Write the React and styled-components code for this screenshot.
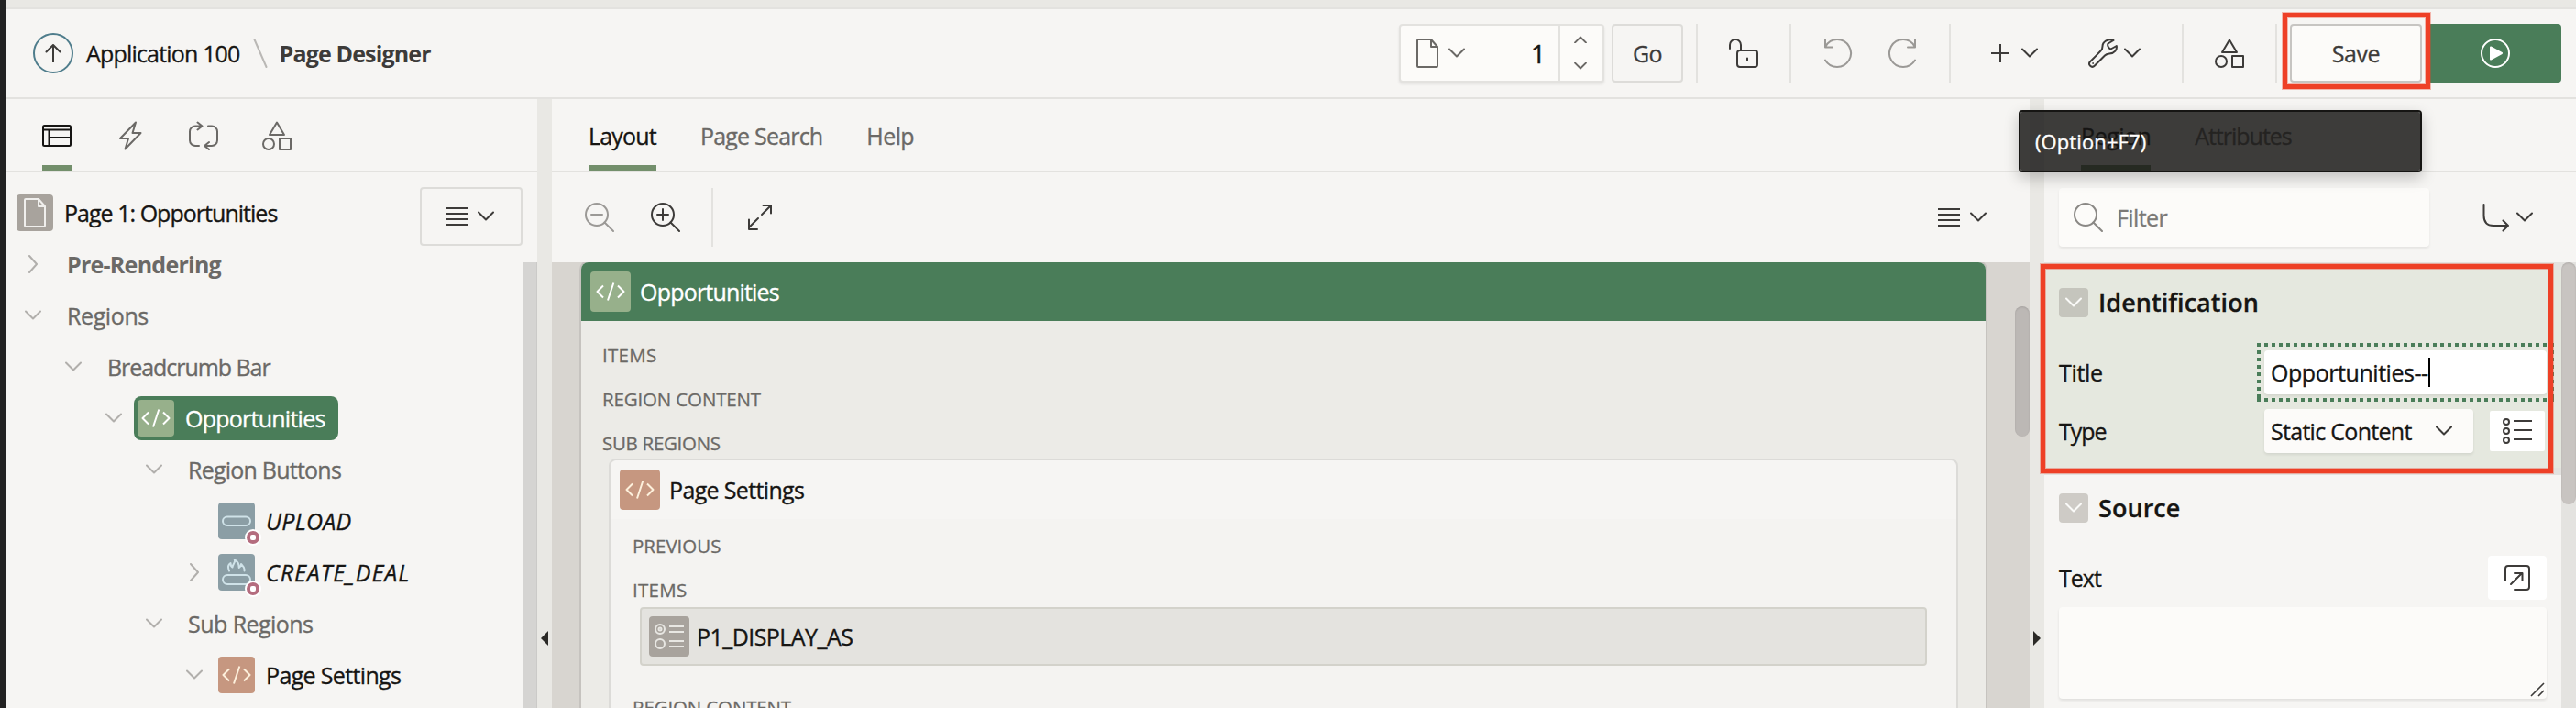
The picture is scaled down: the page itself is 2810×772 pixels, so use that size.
import React from "react";
import styled, { createGlobalStyle, css } from "styled-components";

const c = {
  page: "#f6f5f3",
  gutter: "#e9e8e4",
  line: "#e3e2df",
  lineDark: "#dddcd9",
  ink: "#161513",
  dark: "#3d3b39",
  muted: "#6b6966",
  faint: "#b1afac",
  green: "#4a7d59",
  greenSoft: "#97b08b",
  greenMid: "#738f6b",
  field: "#fcfbf9",
  clay: "#c69780",
  steel: "#8b9ea5",
  stone: "#a8a39d",
  red: "#ee4026",
};

const GlobalStyle = createGlobalStyle`
  *, *::before, *::after { box-sizing: border-box; }
  html, body { margin: 0; padding: 0; overflow: hidden; }
  body {
    background: ${c.page};
    color: ${c.ink};
    font-family: "Open Sans", "Noto Sans", sans-serif;
    font-size: 25px;
    line-height: 36px;
  }
  svg { display: block; flex: none; }
`;

/* ---------- shared parts ---------- */

const Text = styled.span`
  white-space: pre;
  flex: none;
  letter-spacing: ${(p) => p.$track ?? -0.6}px;
  color: ${(p) => p.$color ?? "inherit"};
  font-weight: ${(p) => (p.$bold ? 700 : 400)};
  font-style: ${(p) => (p.$italic ? "italic" : "normal")};
  -webkit-text-stroke: ${(p) => (p.$bold ? 0 : 0.35)}px currentColor;
`;

const Svg = ({ w = 32, h = 32, color = "currentColor", sw = 2, children, ...rest }) => (
  <svg width={w} height={h} viewBox={`0 0 ${w} ${h}`} fill="none" stroke={color} strokeWidth={sw} strokeLinecap="round" strokeLinejoin="round" {...rest}>
    {children}
  </svg>
);

const ChevronDown = (p) => (
  <Svg w={18} h={12} {...p}><path d="M1 1.5 9 9.5 17 1.5" /></Svg>
);
const ChevronRight = (p) => (
  <Svg w={12} h={20} {...p}><path d="M2 1 10 10 2 19" /></Svg>
);
const MenuIcon = () => (
  <Svg w={24} h={20} strokeLinecap="butt"><path d="M0 1H24M0 7H24M0 13H24M0 19H24" /></Svg>
);
const CodeIcon = ({ color }) => (
  <Svg w={32} h={20} color={color} strokeLinecap="butt">
    <path d="M8 3.5 1.5 10 8 16.5M24 3.5 30.5 10 24 16.5M19.3 .5 13 19.5" />
  </Svg>
);
const ShapesIcon = (p) => (
  <Svg {...p}>
    <path d="M16 1.5 24 15H8Z" />
    <circle cx="7" cy="25" r="6" />
    <rect x="19" y="19" width="12" height="12" />
  </Svg>
);
const PageIcon = ({ color, w = 24, h = 32 }) => (
  <Svg w={w} h={h} color={color}>
    <path d={`M2 1H${w - 8}L${w - 1} 9V${h - 2}a1 1 0 0 1-1 1H2a1 1 0 0 1-1-1V2a1 1 0 0 1 1-1ZM${w - 8} 1V9H${w - 1}`} />
  </Svg>
);
const SearchIcon = ({ color, children }) => (
  <Svg color={color}>
    <circle cx="13" cy="13" r="12" />
    <path d="M21.5 21.5 31 31" />
    {children}
  </Svg>
);

const Tile = styled.span`
  display: flex;
  flex: none;
  align-items: center;
  justify-content: center;
  position: relative;
  width: ${(p) => p.$size ?? 40}px;
  height: ${(p) => p.$size ?? 40}px;
  border-radius: 4px;
  background: ${(p) => p.$bg};
`;

const Highlight = styled.div`
  position: absolute;
  border: 5px solid ${c.red};
  box-shadow: 0 0 0 1px rgba(238, 64, 38, 0.35), inset 0 0 0 1px rgba(238, 64, 38, 0.35);
  pointer-events: none;
  z-index: 3;
`;

/* ---------- frame ---------- */

const Shell = styled.div`
  display: grid;
  grid-template-rows: 10px 98px 664px;
  width: 2810px;
  height: 772px;
  border-left: 6px solid #222;
  background: ${c.page};
  overflow: hidden;
`;
const TopStrip = styled.div`
  background: ${c.gutter};
  border-bottom: 2px solid ${c.line};
`;
const Header = styled.header`
  display: flex;
  align-items: center;
  justify-content: space-between;
  padding: 0 16px 0 30px;
  border-bottom: 2px solid ${c.line};
`;
const Crumbs = styled.nav`
  display: flex;
  align-items: center;
`;
const UpButton = styled.span`
  display: flex;
  align-items: center;
  justify-content: center;
  width: 44px;
  height: 44px;
  margin-right: 14px;
  border: 2px solid #4f7d8c;
  border-radius: 50%;
  color: ${c.dark};
`;
const Slash = styled.span`
  display: flex;
  margin: 0 13px 0 14px;
`;

const Tools = styled.div`
  display: flex;
  align-items: center;
  height: 64px;
  color: ${c.dark};
`;
const Divider = styled.span`
  flex: none;
  width: 2px;
  height: 64px;
  background: ${c.line};
`;
const Tool = styled.span`
  display: flex;
  align-items: center;
  justify-content: center;
  gap: ${(p) => p.$gap ?? 0}px;
  width: ${(p) => p.$w}px;
  margin-right: ${(p) => p.$after ?? 0}px;
  color: ${(p) => (p.$off ? "#9b9996" : c.dark)};
`;
const PageSelect = styled.div`
  display: flex;
  width: 224px;
  height: 64px;
  margin-right: 8px;
  border: 2px solid ${c.line};
  border-radius: 4px;
  background: ${c.field};
  box-shadow: 0 2px 3px rgba(0, 0, 0, 0.08);
`;
const PagePick = styled.div`
  display: flex;
  flex: 1;
  align-items: center;
  gap: 11px;
  padding: 0 14px 0 17px;
  border-right: 2px solid ${c.line};
  color: ${c.muted};
`;
const PageNumber = styled.span`
  flex: 1;
  text-align: right;
  font-size: 28px;
  color: ${c.ink};
  -webkit-text-stroke: 0.5px currentColor;
`;
const Stepper = styled.div`
  display: flex;
  flex-direction: column;
  align-items: center;
  justify-content: space-between;
  width: 46px;
  padding: 11px 2px 12px 0;
  color: ${c.muted};
`;
const OutlineButton = styled.span`
  display: flex;
  align-items: center;
  justify-content: center;
  gap: ${(p) => p.$gap ?? 0}px;
  flex: none;
  width: ${(p) => p.$w}px;
  height: 64px;
  padding-right: ${(p) => p.$pr ?? 0}px;
  border: 2px solid ${(p) => (p.$raised ? "#c7c5c2" : c.lineDark)};
  border-radius: 4px;
  background: ${(p) => (p.$raised ? c.field : "transparent")};
  color: ${c.dark};
`;
const SaveSlot = styled.div`
  position: relative;
  margin-left: 14px;
`;
const SaveHighlight = styled(Highlight)`
  inset: -12px -9px -7px -8px;
`;
const RunButton = styled.span`
  display: flex;
  align-items: center;
  justify-content: center;
  width: 146px;
  height: 64px;
  margin-left: 6px;
  padding-left: 2px;
  border-radius: 4px;
  background: ${c.green};
`;

const Main = styled.main`
  display: grid;
  grid-template-columns: 580px 16px 1612px 16px 580px;
`;
const Gutter = styled.div`
  display: flex;
  align-items: center;
  justify-content: center;
  padding-top: 512px;
  background: ${c.gutter};
`;
const Panel = styled.section`
  display: grid;
  grid-template-rows: 80px 98px 486px;
  min-width: 0;
`;
const Tabs = styled.div`
  display: flex;
  align-items: stretch;
  gap: 48px;
  padding-left: 40px;
  border-bottom: 2px solid ${c.line};
`;
const Tab = styled.span`
  display: flex;
  align-items: center;
  padding-top: 2px;
  color: ${(p) => (p.$active ? c.ink : c.muted)};
  ${(p) => p.$active && css`box-shadow: inset 0 -6px 0 ${c.greenMid};`}
`;

/* ---------- left tree ---------- */

const PageHead = styled.div`
  display: flex;
  align-items: flex-start;
  justify-content: space-between;
  padding: 16px 16px 0 12px;
`;
const PageName = styled.div`
  display: flex;
  align-items: center;
  gap: 12px;
  margin-top: 8px;
`;
const TreeBody = styled.div`
  display: flex;
  justify-content: space-between;
`;
const Tree = styled.div`
  display: flex;
  flex-direction: column;
  margin-top: -26px;
  color: ${c.muted};
`;
const TreeRow = styled.div`
  display: flex;
  align-items: center;
  height: 56px;
  padding-left: ${(p) => 8 + p.$level * 44}px;
`;
const Toggle = styled.span`
  display: flex;
  align-items: center;
  justify-content: center;
  width: 44px;
  height: 40px;
  color: ${c.faint};
`;
const NodeLabel = styled.span`
  display: flex;
  align-items: center;
  gap: 12px;
  height: 48px;
  margin-left: ${(p) => (p.$group ? 11 : 0)}px;
  padding: 0 14px 0 4px;
  border-radius: 8px;
  background: ${(p) => (p.$selected ? c.green : "transparent")};
  color: ${(p) => (p.$selected ? "#fff" : p.$group ? c.muted : c.ink)};
`;
const Badge = styled.span`
  position: absolute;
  right: -7px;
  bottom: -7px;
  width: 18px;
  height: 18px;
  border: 2px solid #fff;
  border-radius: 50%;
  background: #b46c7e;
  &::after {
    content: "";
    display: block;
    width: 6px;
    height: 6px;
    margin: 4px;
    border-radius: 2px;
    background: #fff;
  }
`;
const Track = styled.div`
  width: 16px;
  background: ${(p) => p.$bg};
  border: 0 solid #cbcac8;
  border-width: 0 ${(p) => (p.$edge ? 1 : 0)}px;
`;
const Thumb = styled.div`
  width: 16px;
  height: ${(p) => p.$h}px;
  margin-top: ${(p) => p.$top ?? 0}px;
  border-radius: 8px;
  background: ${(p) => p.$bg};
  box-shadow: inset 0 1px 2px rgba(0, 0, 0, 0.12);
`;

/* ---------- layout canvas ---------- */

const Bar = styled.div`
  display: flex;
  align-items: center;
  justify-content: space-between;
  padding: 0 47px 0 36px;
  color: ${c.dark};
`;
const BarGroup = styled.div`
  display: flex;
  align-items: center;
  gap: ${(p) => p.$gap}px;
`;
const Canvas = styled.div`
  display: flex;
  justify-content: space-between;
  padding-left: 32px;
  background: #d8d5d0;
  overflow: hidden;
`;
const Region = styled.div`
  width: 1532px;
  height: 700px;
  border-radius: 8px 8px 0 0;
  background: #ecebe7;
  box-shadow: 0 0 0 2px #c6c3bf;
  clip-path: inset(0 -2px);
`;
const RegionHead = styled.div`
  display: flex;
  align-items: center;
  gap: 10px;
  height: 64px;
  padding-left: 10px;
  border-radius: 8px 8px 0 0;
  background: ${c.green};
  color: #fff;
`;
const RegionBody = styled.div`
  padding: 13px 28px 0 23px;
`;
const SlotLabel = styled.div`
  height: 48px;
  line-height: 48px;
  font-size: 20.5px;
  letter-spacing: ${(p) => p.$track ?? -0.15}px;
  color: ${c.muted};
  -webkit-text-stroke: 0.3px currentColor;
`;
const SubRegion = styled.div`
  width: 1472px;
  height: 400px;
  margin: -7px 0 0 7px;
  border: 2px solid #dcdbd8;
  border-radius: 8px;
  background: #f4f3f1;
`;
const SubHead = styled.div`
  display: flex;
  align-items: center;
  gap: 10px;
  height: 64px;
  padding-left: 10px;
  border-radius: 8px 8px 0 0;
  background: ${c.page};
`;
const SubBody = styled.div`
  padding: 5px 32px 0 24px;
`;
const ItemBox = styled.div`
  display: flex;
  align-items: center;
  gap: 8px;
  height: 64px;
  margin: -5px 0 21px 8px;
  padding-left: 8px;
  border: 2px solid #d3d2cb;
  border-radius: 4px;
  background: #e4e3df;
`;

/* ---------- property editor ---------- */

const FilterBar = styled.div`
  display: flex;
  align-items: center;
  justify-content: space-between;
  padding: 0 47px 0 16px;
  color: ${c.dark};
`;
const FilterField = styled.div`
  display: flex;
  align-items: center;
  gap: 15px;
  width: 404px;
  height: 64px;
  padding-left: 16px;
  border-radius: 4px;
  background: ${c.field};
  box-shadow: 0 2px 3px rgba(0, 0, 0, 0.07);
  color: #7b7976;
`;
const Properties = styled.div`
  display: flex;
`;
const Groups = styled.div`
  width: 564px;
`;
const Group = styled.div`
  position: relative;
  height: 232px;
  padding: 20px 16px 0;
  border: 0 solid ${c.line};
  border-width: ${(p) => (p.$active ? 8 : 0)}px 0;
  background: ${(p) => (p.$active ? "#e5e8df" : "transparent")};
`;
const GroupHighlight = styled(Highlight)`
  inset: -6px 9px -6px -4px;
`;
const GroupTitle = styled.div`
  display: flex;
  align-items: center;
  gap: 11px;
  height: 32px;
  margin-bottom: 36px;
  font-size: 27px;
  font-weight: 600;
  letter-spacing: 0.05px;
  -webkit-text-stroke: 0.3px currentColor;
`;
const Collapse = styled.span`
  display: flex;
  align-items: center;
  justify-content: center;
  width: 32px;
  height: 32px;
  border-radius: 4px;
  background: ${(p) => p.$bg};
  color: #fafaf8;
`;
const Field = styled.div`
  display: grid;
  grid-template-columns: 224px 308px;
  align-items: center;
  height: 48px;
  margin-bottom: 16px;
`;
const dots = (dir) => `repeating-linear-gradient(${dir}, ${c.green} 0 4px, transparent 4px 8px)`;
const TextInput = styled.div`
  display: flex;
  align-items: center;
  position: relative;
  height: 48px;
  padding-left: 7px;
  border-radius: 4px;
  background: #fff;
  box-shadow: 0 2px 3px rgba(0, 0, 0, 0.08);
  &::before {
    content: "";
    position: absolute;
    inset: -8px;
    background: ${dots("90deg")} 0 0 / 100% 4px no-repeat,
      ${dots("90deg")} 0 100% / 100% 4px no-repeat,
      ${dots("180deg")} 0 0 / 4px 100% no-repeat,
      ${dots("180deg")} 100% 0 / 4px 100% no-repeat;
  }
`;
const Caret = styled.span`
  width: 2px;
  height: 32px;
  background: #000;
`;
const Picker = styled.div`
  display: flex;
  align-items: center;
  justify-content: space-between;
`;
const Select = styled.div`
  display: flex;
  align-items: center;
  justify-content: space-between;
  width: 228px;
  height: 48px;
  padding: 0 23px 0 7px;
  border-radius: 4px;
  background: ${c.field};
  box-shadow: 0 2px 3px rgba(0, 0, 0, 0.08);
`;
const SquareButton = styled.span`
  display: flex;
  align-items: center;
  justify-content: center;
  width: ${(p) => p.$w}px;
  height: ${(p) => p.$h}px;
  margin-right: ${(p) => p.$mr ?? 0}px;
  border-radius: ${(p) => p.$r ?? 4}px;
  background: #fff;
  color: ${c.dark};
`;
const SourceLine = styled.div`
  display: flex;
  align-items: center;
  justify-content: space-between;
  height: 48px;
  margin-bottom: 8px;
`;
const TextArea = styled.div`
  display: flex;
  align-items: flex-end;
  justify-content: flex-end;
  height: 100px;
  padding: 2px;
  border-radius: 4px;
  background: ${c.field};
  box-shadow: 0 2px 3px rgba(0, 0, 0, 0.09);
  color: ${c.dark};
`;
const Tooltip = styled.div`
  position: absolute;
  right: 0;
  top: 94px;
  display: flex;
  align-items: center;
  width: 440px;
  height: 68px;
  padding-left: 16px;
  border: 2px solid ${c.ink};
  border-radius: 4px;
  background: rgba(22, 21, 19, 0.826);
  background-clip: padding-box;
  box-shadow: 0 6px 16px rgba(0, 0, 0, 0.22);
  color: #fff;
  font-size: 22px;
  z-index: 4;
`;

/* ---------- data ---------- */

const tree = [
  { level: 0, text: "Pre-Rendering", open: false, bold: true, track: -0.75 },
  { level: 0, text: "Regions", open: true, track: -0.4 },
  { level: 1, text: "Breadcrumb Bar", open: true, track: -1.05 },
  { level: 2, text: "Opportunities", open: true, icon: "code", bg: c.greenSoft, fg: "#fff", selected: true, track: -0.75 },
  { level: 3, text: "Region Buttons", open: true, track: -0.77 },
  { level: 4, text: "UPLOAD", icon: "button", bg: c.steel, italic: true, track: 0.3 },
  { level: 4, text: "CREATE_DEAL", open: false, icon: "hot", bg: c.steel, italic: true, track: 0.95 },
  { level: 3, text: "Sub Regions", open: true, track: -0.55 },
  { level: 4, text: "Page Settings", open: true, icon: "code", bg: c.clay, fg: "#fdf0dc", track: -0.65 },
];

function NodeIcon({ node }) {
  if (node.icon === "code") return <CodeIcon color={node.fg} />;
  return (
    <>
      <Svg color="#cfe2e8">
        {node.icon === "hot" ? (
          <>
            <rect x="1" y="19" width="30" height="10" rx="5" />
            <path d="M8 14.5C6.5 11 7 7.5 9.5 6 9.5 9 10.5 10 11.5 10.5 12 6.500 15 5.5 13.8 2.5 18 4.5 18.5 7 18.7 11 20 10 21 9 21 7 23.5 9.5 25.5 11 24.5 14.5" />
          </>
        ) : (
          <rect x="1" y="11.500" width="30" height="9.500" rx="4.750" />
        )}
      </Svg>
      <Badge />
    </>
  );
}

function LeftPanel() {
  return (
    <Panel>
      <Tabs>
        <Tab $active>
          <Svg color={c.ink}>
            <rect x="1" y="5" width="30" height="22" rx="1.5" />
            <path d="M1 9.5H31M7.5 10V27M8 18H31" strokeLinecap="butt" />
          </Svg>
        </Tab>
        <Tab>
          <Svg><path d="M22 1.5 5 19H14L10.500 30.5 27.5 13H18.5Z" /></Svg>
        </Tab>
        <Tab>
          <Svg>
            <path d="M9.5 1.5 14.5 5.5 9.5 9.5M14 5.5H7A6 6 0 0 0 1 11.5V21A6 6 0 0 0 7 27H11M21 5.5H25A6 6 0 0 1 31 11.5V21A6 6 0 0 1 25 27H18M22 23 17 27 22 31" />
          </Svg>
        </Tab>
        <Tab><ShapesIcon /></Tab>
      </Tabs>
      <PageHead>
        <PageName>
          <Tile $bg={c.stone}><PageIcon color="#f0efed" /></Tile>
          <Text $track={-0.97}>Page 1: Opportunities</Text>
        </PageName>
        <OutlineButton $w={112} $gap={11} $pr={3}><MenuIcon /><ChevronDown /></OutlineButton>
      </PageHead>
      <TreeBody>
        <Tree>
          {tree.map((n) => (
            <TreeRow key={n.text} $level={n.level}>
              <Toggle>
                {n.open === true && <ChevronDown />}
                {n.open === false && <ChevronRight />}
              </Toggle>
              <NodeLabel $group={!n.icon} $selected={n.selected}>
                {n.icon && <Tile $bg={n.bg}><NodeIcon node={n} /></Tile>}
                <Text $track={n.track} $bold={n.bold} $italic={n.italic}>{n.text}</Text>
              </NodeLabel>
            </TreeRow>
          ))}
        </Tree>
        <Track $bg="#d5d4d2" $edge />
      </TreeBody>
    </Panel>
  );
}

function CenterPanel() {
  return (
    <Panel>
      <Tabs>
        <Tab $active><Text $track={-0.8}>Layout</Text></Tab>
        <Tab><Text $track={-0.8}>Page Search</Text></Tab>
        <Tab><Text $track={-0.6}>Help</Text></Tab>
      </Tabs>
      <Bar>
        <BarGroup $gap={34}>
          <BarGroup $gap={40}>
            <SearchIcon color="#9b9996"><path d="M7 13H19" /></SearchIcon>
            <SearchIcon><path d="M7 13H19M13 7V19" /></SearchIcon>
          </BarGroup>
          <Divider />
          <Svg w={36} h={32}>
            <path d="M19 13 29 3M20.500 3H29V11.5M15 17 5 27M5 18.5V29H14" />
          </Svg>
        </BarGroup>
        <BarGroup $gap={11}><MenuIcon /><ChevronDown /></BarGroup>
      </Bar>
      <Canvas>
        <Region>
          <RegionHead>
            <Tile $size={44} $bg={c.greenSoft}><CodeIcon color="#fff" /></Tile>
            <Text $track={-0.8}>Opportunities</Text>
          </RegionHead>
          <RegionBody>
            <SlotLabel $track={0.3}>ITEMS</SlotLabel>
            <SlotLabel>REGION CONTENT</SlotLabel>
            <SlotLabel $track={-0.3}>SUB REGIONS</SlotLabel>
            <SubRegion>
              <SubHead>
                <Tile $size={44} $bg={c.clay}><CodeIcon color="#fdf0dc" /></Tile>
                <Text $track={-0.65}>Page Settings</Text>
              </SubHead>
              <SubBody>
                <SlotLabel $track={0}>PREVIOUS</SlotLabel>
                <SlotLabel $track={0.3}>ITEMS</SlotLabel>
                <ItemBox>
                  <Tile $size={44} $bg={c.stone}>
                    <Svg color="#e8e7e3" strokeLinecap="butt">
                      <circle cx="6" cy="8" r="5" />
                      <circle cx="6" cy="8" r="1.5" />
                      <circle cx="6" cy="24" r="5" />
                      <path d="M16 5H32M16 11H32M16 21H32M16 27H32" />
                    </Svg>
                  </Tile>
                  <Text $track={-0.55}>P1_DISPLAY_AS</Text>
                </ItemBox>
                <SlotLabel>REGION CONTENT</SlotLabel>
              </SubBody>
            </SubRegion>
          </RegionBody>
        </Region>
        <Thumb $h={142} $top={48} $bg="#bcb8b5" />
      </Canvas>
    </Panel>
  );
}

function RightPanel() {
  return (
    <Panel>
      <Tabs>
        <Tab $active><Text $track={-0.6}>Region</Text></Tab>
        <Tab><Text $track={-1}>Attributes</Text></Tab>
      </Tabs>
      <FilterBar>
        <FilterField>
          <SearchIcon color="#8a8885" />
          <Text $track={-0.6}>Filter</Text>
        </FilterField>
        <BarGroup $gap={8}>
          <Svg w={30} h={32}><path d="M2.5 2V14C2.5 21 6 25 13 25H29M23.500 19.5 29 25 23.5 30.5" /></Svg>
          <ChevronDown />
        </BarGroup>
      </FilterBar>
      <Properties>
        <Groups>
          <Group $active>
            <GroupTitle><Collapse $bg="#c5c5bd"><ChevronDown /></Collapse>Identification</GroupTitle>
            <Field>
              <Text $track={-0.3}>Title</Text>
              <TextInput><Text $track={-0.45}>Opportunities--</Text><Caret /></TextInput>
            </Field>
            <Field>
              <Text $track={-1}>Type</Text>
              <Picker>
                <Select><Text $track={-0.7}>Static Content</Text><ChevronDown color={c.dark} /></Select>
                <SquareButton $w={60} $h={44} $mr={2} $r={2}>
                  <Svg w={32} h={28} strokeLinecap="butt">
                    <circle cx="4" cy="4" r="3" />
                    <circle cx="4" cy="14" r="3" />
                    <circle cx="4" cy="24" r="3" />
                    <path d="M12 3H32M12 13H32M12 23H32" />
                  </Svg>
                </SquareButton>
              </Picker>
            </Field>
            <GroupHighlight />
          </Group>
          <Group>
            <GroupTitle><Collapse $bg="#cecbc6"><ChevronDown /></Collapse>Source</GroupTitle>
            <SourceLine>
              <Text $track={-1}>Text</Text>
              <SquareButton $w={64} $h={48}>
                <Svg w={28} h={28}>
                  <path d="M1 17V4a3 3 0 0 1 3-3H24a3 3 0 0 1 3 3V24a3 3 0 0 1-3 3H11M7 21 19 9M11 9H19.5V17" />
                </Svg>
              </SquareButton>
            </SourceLine>
            <TextArea>
              <Svg w={16} h={16} strokeLinecap="butt" sw={1.6}><path d="M1 15 15 1M9 15 15 9" /></Svg>
            </TextArea>
          </Group>
        </Groups>
        <Track $bg="#e4e3e0"><Thumb $h={264} $bg="#c8c4c1" /></Track>
      </Properties>
    </Panel>
  );
}

function TopBar() {
  return (
    <Header>
      <Crumbs>
        <UpButton>
          <Svg w={18} h={20}><path d="M9 19.5V1.5M1.5 8.5 9 1 16.5 8.5" /></Svg>
        </UpButton>
        <Text $track={-0.82}>Application 100</Text>
        <Slash><Svg w={16} h={32} color="#bab8b5"><path d="M1.5 1 14.5 31" /></Svg></Slash>
        <Text $bold $track={-0.85} $color={c.dark}>Page Designer</Text>
      </Crumbs>
      <Tools>
        <PageSelect>
          <PagePick>
            <PageIcon />
            <ChevronDown />
            <PageNumber>1</PageNumber>
          </PagePick>
          <Stepper>
            <Svg w={14} h={8} sw={1.8}><path d="M1 7.5 7 1.5 13 7.5" /></Svg>
            <Svg w={14} h={8} sw={1.8}><path d="M1 .5 7 6.5 13 .5" /></Svg>
          </Stepper>
        </PageSelect>
        <OutlineButton $w={78}><Text $track={-0.6}>Go</Text></OutlineButton>
        <Tool $w={14} />
        <Divider />
        <Tool $w={100}>
          <Svg>
            <rect x="9" y="13" width="22" height="18" rx="3" />
            <path d="M1 11V7A6 6 0 0 1 13 7V12M20 21.5V23.5" />
          </Svg>
        </Tool>
        <Divider />
        <Tool $w={172} $gap={38} $off>
          <Svg>
            <path d="M2 1V9.5H10M2.5 8.5C5 4 10 1 15 1A15 15 0 1 1 2 23.5" />
          </Svg>
          <Svg>
            <path d="M30 1V9.5H22M29.5 8.5C27 4 22 1 17 1A15 15 0 1 0 30 23.5" />
          </Svg>
        </Tool>
        <Divider />
        <Tool $w={139} $gap={13}>
          <Svg w={20} h={20} strokeLinecap="butt"><path d="M10 0V20M0 10H20" /></Svg>
          <ChevronDown />
        </Tool>
        <Tool $w={79} $gap={7} $after={34}>
          <Svg>
            <path d="M27.5 2C22 -.5 15.5 3.5 15.5 8.5C15.5 11 15 12.2 13.5 13.5L2 25.3C-.8 28.2 3.5 33 7 29.5L18 18.5C19.5 17 21 16.8 23 16.5C29 16 31.5 12 30.8 8L24.5 11.5C22 10.5 20.5 7.5 21.5 5.5Z" />
            <circle cx="5" cy="27" r=".4" strokeWidth="1" />
          </Svg>
          <ChevronDown />
        </Tool>
        <Divider />
        <Tool $w={100}><ShapesIcon /></Tool>
        <Divider />
        <SaveSlot>
          <OutlineButton $w={144} $raised><Text $track={-0.4}>Save</Text></OutlineButton>
          <SaveHighlight />
          <Tooltip><Text $track={0.1}>(Option+F7)</Text></Tooltip>
        </SaveSlot>
        <RunButton>
          <Svg color="#fff">
            <circle cx="16" cy="16" r="15" />
            <path d="M11 9.5 23 16 11 22.5Z" fill="#fff" />
          </Svg>
        </RunButton>
      </Tools>
    </Header>
  );
}

export default function App() {
  return (
    <>
      <GlobalStyle />
      <Shell>
        <TopStrip />
        <TopBar />
        <Main>
          <LeftPanel />
          <Gutter><Svg w={8} h={16} color="none"><path d="M8 0V16L0 8Z" fill="#2b2a27" /></Svg></Gutter>
          <CenterPanel />
          <Gutter><Svg w={8} h={16} color="none"><path d="M0 0V16L8 8Z" fill="#2b2a27" /></Svg></Gutter>
          <RightPanel />
        </Main>
      </Shell>
    </>
  );
}
